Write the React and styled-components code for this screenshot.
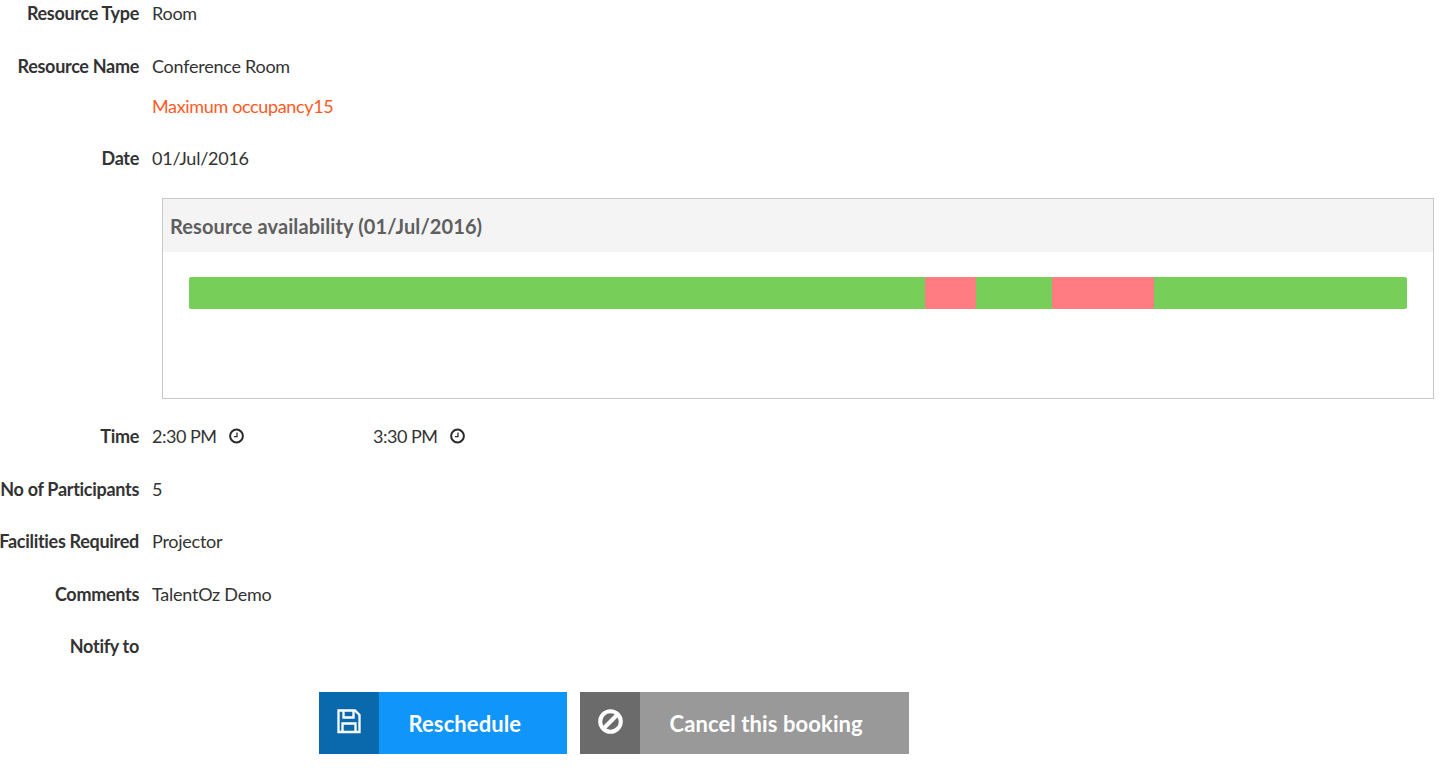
import React from "react";
import styled, { createGlobalStyle } from "styled-components";

const GlobalStyle = createGlobalStyle`
  html, body {
    margin: 0;
    padding: 0;
    background: #fff;
    overflow: hidden;
  }
  body {
    font-family: "Lato", "Liberation Sans", sans-serif;
    font-size: 18px;
    letter-spacing: -0.25px;
    color: #333;
  }
`;

const Page = styled.div`
  width: 1448px;
  height: 771px;
  overflow: hidden;
`;

const Row = styled.div`
  display: grid;
  grid-template-columns: 139px 1fr;
  column-gap: 13px;
  align-items: center;
  height: 26px;
  margin-bottom: ${props => props.gap ?? 26.5}px;
`;

const Label = styled.div`
  display: flex;
  justify-content: flex-end;
  white-space: nowrap;
  font-weight: 700;
  letter-spacing: -0.3px;
  color: #333;
`;

const Value = styled.div`
  color: ${props => (props.warning ? "#ff5a1f" : "#333")};
  letter-spacing: ${props => (props.warning ? "-0.35px" : "inherit")};
  white-space: nowrap;
`;

const Panel = styled.section`
  box-sizing: border-box;
  width: 1272px;
  height: 201px;
  margin: 0 0 24.5px 162px;
  border: 1px solid #c8c8c8;
`;

const PanelHeader = styled.h3`
  box-sizing: border-box;
  margin: 0;
  height: 53px;
  padding: 2px 0 0 7px;
  display: flex;
  align-items: center;
  background: #f4f4f4;
  font-size: 20px;
  font-weight: 700;
  letter-spacing: 0.1px;
  color: #5f5f5f;
`;

const Timeline = styled.div`
  display: flex;
  height: 32px;
  margin: 25px 26px 0;
  border-radius: 3px;
  overflow: hidden;
  background: #77ce58;
`;

const Slot = styled.div`
  width: ${props => props.width}px;
  background: ${props => (props.busy ? "#ff7d82" : "#77ce58")};
  border-radius: ${props => (props.busy ? "2px" : "0")};
`;

const TimeGroup = styled.div`
  display: flex;
  align-items: center;
`;

const TimeField = styled.div`
  display: flex;
  align-items: center;
  gap: 12px;
  width: 221px;
  letter-spacing: -0.5px;
`;

const Actions = styled.div`
  display: flex;
  gap: 13px;
  margin-left: 319px;
`;

const ActionButton = styled.button`
  display: flex;
  align-items: stretch;
  width: ${props => props.width}px;
  height: 62px;
  padding: 0;
  border: 0;
  background: ${props => props.bg};
  color: #fff;
  font-family: inherit;
  font-size: 22px;
  font-weight: 700;
  letter-spacing: 0.1px;
  cursor: pointer;
`;

const ButtonIcon = styled.span`
  display: flex;
  align-items: center;
  justify-content: center;
  flex: 0 0 60px;
  padding-bottom: 2px;
  box-sizing: border-box;
  background: ${props => props.bg};
`;

const ButtonText = styled.span`
  display: flex;
  align-items: center;
  padding: 2px 0 0 29.5px;
  white-space: nowrap;
`;

const ClockIcon = () => (
  <svg width="17" height="16" viewBox="0 0 17 16" fill="none">
    <circle cx="8.5" cy="8" r="6.4" stroke="#2b2b2b" strokeWidth="2" />
    <path d="M9 4.5V8.6H6" stroke="#2b2b2b" strokeWidth="1.3" />
  </svg>
);

const SaveIcon = () => (
  <svg width="24" height="25" viewBox="0 0 24 25" fill="none" stroke="#fff" strokeWidth="2.3">
    <path d="M1.5 1.5H18L22.5 6V23H1.5Z" />
    <path d="M6.5 1.5V8.5H16.5V1.5" />
    <path d="M5.5 23V14.5H18.5V23" />
  </svg>
);

const BanIcon = () => (
  <svg width="25" height="25" viewBox="0 0 25 25" fill="none" stroke="#fff" strokeWidth="4">
    <circle cx="12.5" cy="12.5" r="10.3" />
    <path d="M5.5 19.5L19.5 5.5" />
  </svg>
);

const slots = [
  { width: 736 },
  { width: 51, busy: true },
  { width: 76 },
  { width: 102, busy: true },
  { width: 253 },
];

const App = () => {
  return (
    <Page>
      <GlobalStyle />
      <Row gap={27}>
        <Label>Resource Type</Label>
        <Value>Room</Value>
      </Row>
      <Row gap={14}>
        <Label>Resource Name</Label>
        <Value>Conference Room</Value>
      </Row>
      <Row gap={26}>
        <span />
        <Value warning>Maximum occupancy15</Value>
      </Row>
      <Row>
        <Label>Date</Label>
        <Value>01/Jul/2016</Value>
      </Row>
      <Panel>
        <PanelHeader>Resource availability (01/Jul/2016)</PanelHeader>
        <Timeline>
          {slots.map((slot, i) => (
            <Slot key={i} width={slot.width} busy={slot.busy} />
          ))}
        </Timeline>
      </Panel>
      <Row>
        <Label>Time</Label>
        <TimeGroup>
          <TimeField>
            2:30 PM <ClockIcon />
          </TimeField>
          <TimeField>
            3:30 PM <ClockIcon />
          </TimeField>
        </TimeGroup>
      </Row>
      <Row>
        <Label>No of Participants</Label>
        <Value>5</Value>
      </Row>
      <Row>
        <Label>Facilities Required</Label>
        <Value>Projector</Value>
      </Row>
      <Row>
        <Label>Comments</Label>
        <Value>TalentOz Demo</Value>
      </Row>
      <Row gap={32.5}>
        <Label>Notify to</Label>
        <span />
      </Row>
      <Actions>
        <ActionButton width={248} bg="#1095fb">
          <ButtonIcon bg="#0a69ad">
            <SaveIcon />
          </ButtonIcon>
          <ButtonText>Reschedule</ButtonText>
        </ActionButton>
        <ActionButton width={329} bg="#999999">
          <ButtonIcon bg="#6b6b6b">
            <BanIcon />
          </ButtonIcon>
          <ButtonText>Cancel this booking</ButtonText>
        </ActionButton>
      </Actions>
    </Page>
  );
};

export default App;
